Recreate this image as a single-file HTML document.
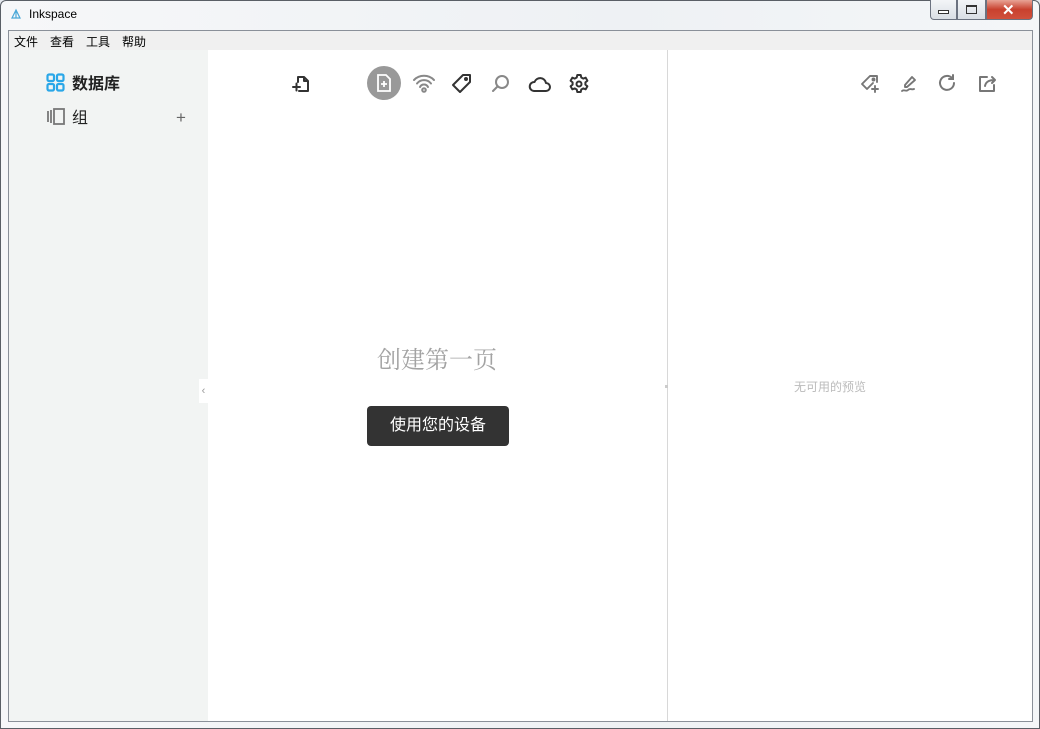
<!DOCTYPE html>
<html><head><meta charset="utf-8"><style>
*{margin:0;padding:0;box-sizing:border-box}
body{width:1040px;height:729px;background:#e4e8ee;font-family:"Liberation Sans","Noto Sans CJK SC",sans-serif;position:relative;overflow:hidden}
.frame{position:absolute;left:0;top:0;width:1040px;height:729px;border:1px solid #5a5f66;border-radius:6px 6px 0 0;background:linear-gradient(90deg,#f6f7f9,#eef1f4 60%,#f4f6f8)}
.title{position:absolute;left:29px;top:7px;font-size:12px;color:#000}
.client{position:absolute;left:8px;top:30px;width:1025px;height:692px;border:1px solid #8a9099;background:#fff;overflow:hidden}
.menu{position:absolute;left:0;top:0;width:100%;height:19px;background:#f0f0f0;font-size:12px}
.menu span{position:absolute;top:2px}
.side{position:absolute;left:0;top:19px;width:199px;height:680px;background:#f2f4f3}
.div{position:absolute;left:658px;top:19px;width:1px;height:680px;background:#d8d8d8}
svg{position:absolute;overflow:visible}
.ic{fill:none;stroke:#333;stroke-width:2;stroke-linecap:round;stroke-linejoin:round}
.btns{position:absolute;top:0;height:20px;border:1px solid #6b7280;border-top:none}
</style></head><body>
<div class="frame"></div>
<svg width="12" height="12" style="left:10px;top:9px"><path d="M6 1 L2 9 L10 9 Z M6 1 L6 9" fill="none" stroke="#4aa8d8" stroke-width="1.2"/></svg>
<div class="title">Inkspace</div>
<div class="btns" style="left:930px;width:27px;background:linear-gradient(#f3f5f8,#d9dee5);border-radius:0 0 0 4px"></div>
<div style="position:absolute;left:938px;top:10px;width:11px;height:4px;border:1px solid #333;background:#fff"></div>
<div class="btns" style="left:957px;width:29px;background:linear-gradient(#f3f5f8,#d9dee5)"></div>
<div style="position:absolute;left:966px;top:5px;width:11px;height:9px;border:1px solid #333;border-top-width:2px"></div>
<div class="btns" style="left:986px;width:47px;background:linear-gradient(#e8a395,#c8412e 50%,#d0503c);border-radius:0 0 4px 0"></div>
<div style="position:absolute;left:1002px;top:1px;font-size:15px;font-weight:bold;color:#fff">✕</div>
<div class="client">
 <div class="menu"><span style="left:5px">文件</span><span style="left:41px">查看</span><span style="left:77px">工具</span><span style="left:113px">帮助</span></div>
 <div class="side">
  <svg width="18" height="18" style="left:38px;top:24px"><g fill="none" stroke="#2aa7e8" stroke-width="2.2"><rect x="0.5" y="0.5" width="6.5" height="6.5" rx="1.5"/><rect x="10" y="0.5" width="6.5" height="6.5" rx="1.5"/><rect x="0.5" y="10" width="6.5" height="6.5" rx="1.5"/><rect x="10" y="10" width="6.5" height="6.5" rx="1.5"/></g></svg>
  <div style="position:absolute;left:63px;top:20px;font-size:16px;font-weight:bold;color:#222">数据库</div>
  <svg width="18" height="18" style="left:38px;top:58px"><g fill="none" stroke="#777" stroke-width="1.8"><rect x="7" y="1" width="10" height="15"/><path d="M1 3v11M4 2v13"/></g></svg>
  <div style="position:absolute;left:63px;top:54px;font-size:16px;color:#222">组</div>
  <div style="position:absolute;left:167px;top:58px;font-size:17px;color:#666">+</div>
  <div style="position:absolute;left:190px;top:329px;width:9px;height:24px;background:#fff;color:#999;font-size:11px;line-height:24px;text-align:center">‹</div>
 </div>
 <div class="div"></div>
 <svg width="20" height="20" style="left:283px;top:43px" class="ic"><path d="M6 8V3h6l4 4v10H7M12 3v4h4M1 13h7M4.5 9.5v7"/></svg>
 <div style="position:absolute;left:358px;top:35px;width:34px;height:34px;border-radius:50%;background:#999"></div>
 <svg width="16" height="18" style="left:367px;top:43px"><path d="M2 1h8l4 4v12H2z" fill="none" stroke="#fff" stroke-width="1.8"/><path d="M8 7v6M5 10h6" stroke="#fff" stroke-width="1.8"/></svg>
 <svg width="22" height="20" style="left:404px;top:43px"><g fill="none" stroke="#888" stroke-width="2" stroke-linecap="round"><path d="M1 6a14 14 0 0 1 20 0M4 9.5a9 9 0 0 1 14 0M7 13a4.5 4.5 0 0 1 8 0"/><circle cx="11" cy="16" r="1.8"/></g></svg>
 <svg width="20" height="20" style="left:443px;top:43px" class="ic"><path d="M11 1h7v7l-10 10-7-7z"/><circle cx="14" cy="5" r="1"/></svg>
 <svg width="20" height="20" style="left:482px;top:43px"><g fill="none" stroke="#888" stroke-width="2" stroke-linecap="round"><circle cx="11" cy="8" r="6"/><path d="M6.5 12.5L2 17"/></g></svg>
 <svg width="22" height="18" style="left:520px;top:45px" class="ic"><path d="M5 15h12a4 4 0 0 0 0-8 6 6 0 0 0-11.5-1A4.5 4.5 0 0 0 5 15z"/></svg>
 <svg width="20" height="20" style="left:560px;top:43px" class="ic"><path d="M8.3 1h3.4l.6 2.5 2 1.1 2.4-.9 1.7 3-2 1.7v2.2l2 1.7-1.7 3-2.4-.9-2 1.1-.6 2.5H8.3l-.6-2.5-2-1.1-2.4.9-1.7-3 2-1.7V8.4l-2-1.7 1.7-3 2.4.9 2-1.1z"/><circle cx="10" cy="10" r="2.5"/></svg>
 <div style="position:absolute;left:368px;top:309px;font-family:'Liberation Serif','Noto Serif CJK SC',serif;font-size:24px;color:#a3a3a3">创建第一页</div>
 <div style="position:absolute;left:358px;top:375px;width:142px;height:40px;background:#333;border-radius:4px;color:#fff;font-size:16px;text-align:center;line-height:40px">使用您的设备</div>
 <svg width="20" height="20" style="left:852px;top:43px"><g fill="none" stroke="#777" stroke-width="1.9" stroke-linejoin="round" stroke-linecap="round"><path d="M12 9L6 15 1 10 9 2h7v6"/><circle cx="12.5" cy="5.5" r="1"/><path d="M14 12v6M11 15h6"/></g></svg>
 <svg width="18" height="20" style="left:891px;top:43px"><g fill="none" stroke="#777" stroke-width="1.9" stroke-linecap="round" stroke-linejoin="round"><path d="M5 11l7-8 3 3-8 7H5z"/><path d="M2 17c2-2 4 1 6-1s4 0 6-1"/></g></svg>
 <svg width="20" height="20" style="left:929px;top:43px"><g fill="none" stroke="#777" stroke-width="2" stroke-linecap="round"><path d="M16 9a7 7 0 1 1-2-5"/><path d="M15 1v4h-4"/></g></svg>
 <svg width="20" height="20" style="left:969px;top:43px"><g fill="none" stroke="#777" stroke-width="2" stroke-linecap="round" stroke-linejoin="round"><path d="M9 3H2v14h14v-6"/><path d="M7 12c1-5 5-6 10-6M14 3l3 3-3 3"/></g></svg>
 <div style="position:absolute;left:785px;top:347px;font-size:12px;color:#bbb">无可用的预览</div>
 <div style="position:absolute;left:656px;top:354px;width:3px;height:3px;background:#ccc"></div>
</div>
</body></html>
